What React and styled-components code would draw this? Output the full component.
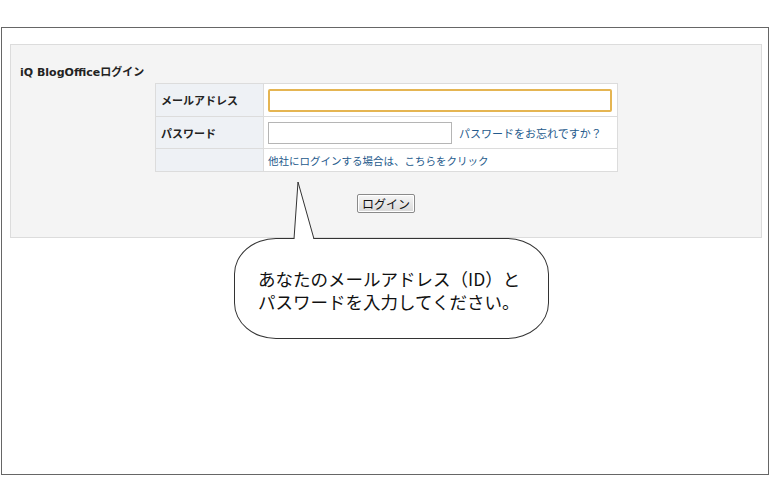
import React from "react";
import styled, { createGlobalStyle } from "styled-components";

const GlobalStyle = createGlobalStyle`
  html, body {
    margin: 0;
    padding: 0;
    background: #fff;
  }
  body {
    font-family: "Noto Sans CJK JP", "Liberation Sans", sans-serif;
    color: #222;
  }
`;

const Page = styled.div`
  width: 770px;
  height: 500px;
  padding: 27px 0 0 1px;
  box-sizing: border-box;
`;

const Frame = styled.div`
  position: relative;
  width: 768px;
  height: 448px;
  box-sizing: border-box;
  border: 1px solid #666;
  padding: 16px 6px 0 8px;
`;

const Panel = styled.div`
  height: 194px;
  box-sizing: border-box;
  background: #f4f4f4;
  border: 1px solid #dcdcdc;
  padding: 20px 0 0 9px;
`;

const Title = styled.h1`
  margin: 0 0 3px 0;
  font-family: "DejaVu Sans", "Noto Sans CJK JP", sans-serif;
  font-size: 11px;
  font-weight: bold;
  line-height: 15px;
  color: #222;
`;

const Table = styled.div`
  width: 462px;
  margin: 0 auto 0 135px;
  display: grid;
  grid-template-columns: 108px 1fr;
  border-top: 1px solid #dcdcdc;
  border-left: 1px solid #dcdcdc;
`;

const Cell = styled.div`
  height: ${(p) => p.$h}px;
  box-sizing: border-box;
  border-right: 1px solid #dcdcdc;
  border-bottom: 1px solid #dcdcdc;
  display: flex;
  align-items: center;
  gap: 7px;
  padding-left: ${(p) => (p.$label ? 5 : 4)}px;
  background: ${(p) => (p.$label ? "#eef1f5" : "#fff")};
  font-size: 11px;
  font-weight: ${(p) => (p.$label ? "bold" : "normal")};
  color: #222;
`;

const Input = styled.input`
  width: ${(p) => p.$w}px;
  height: ${(p) => p.$hgt}px;
  box-sizing: border-box;
  margin: 0;
  padding: 0 3px;
  background: #fff;
  border: ${(p) => (p.$focus ? "2px solid #e5b552" : "1px solid #b5b5b5")};
  border-radius: ${(p) => (p.$focus ? "2px" : "0")};
  outline: none;
`;

const Link = styled.a`
  color: #255a8c;
  text-decoration: none;
  font-size: ${(p) => p.$size || 11}px;
  letter-spacing: ${(p) => p.$track || 0}px;
  white-space: nowrap;
`;

const ButtonRow = styled.div`
  display: flex;
  justify-content: center;
  padding: 22px 0 0 0;
  margin-left: -9px;
`;

const Button = styled.button`
  height: 19px;
  width: 58px;
  padding: 0;
  font-family: "Noto Sans CJK JP", sans-serif;
  font-size: 12px;
  line-height: 15px;
  color: #111;
  background: linear-gradient(#f6f6f6, #d9d9d9);
  border: 1px solid #8a8a8a;
  border-radius: 2px;
  box-shadow: inset 0 0 0 1px #fff;
`;

const Bubble = styled.div`
  position: absolute;
  left: 232px;
  top: 210px;
  width: 315px;
  height: 101px;
  box-sizing: border-box;
  background: #fff;
  border: 1px solid #333;
  border-radius: 42px / 36px;
  padding: 28px 0 0 23px;
  font-size: 17.5px;
  line-height: 23px;
  color: #111;
`;

const Line = styled.div`
  white-space: nowrap;
`;

const Tail = styled.svg`
  position: absolute;
  left: 285px;
  top: 150px;
  overflow: visible;
`;

export default function App() {
  return (
    <>
      <GlobalStyle />
      <Page>
        <Frame>
          <Panel>
            <Title>iQ BlogOfficeログイン</Title>
            <Table>
              <Cell $label $h={33}>メールアドレス</Cell>
              <Cell $h={33}>
                <Input $focus $w={344} $hgt={23} />
              </Cell>
              <Cell $label $h={32}>パスワード</Cell>
              <Cell $h={32}>
                <Input type="password" $w={184} $hgt={22} />
                <Link href="#">パスワードをお忘れですか？</Link>
              </Cell>
              <Cell $label $h={23} />
              <Cell $h={23}>
                <Link href="#" $size={10.5}>他社にログインする場合は、こちらをクリック</Link>
              </Cell>
            </Table>
            <ButtonRow>
              <Button>ログイン</Button>
            </ButtonRow>
          </Panel>

          <Bubble>
            <Line>あなたのメールアドレス（ID）と</Line>
            <Line>パスワードを入力してください。</Line>
          </Bubble>
          <Tail width="30" height="64" viewBox="0 0 30 64">
            <polygon points="11,4 7,62 27,62" fill="#fff" />
            <polyline points="7,61 11,4 27,61" fill="none" stroke="#333" strokeWidth="1" />
          </Tail>
        </Frame>
      </Page>
    </>
  );
}
